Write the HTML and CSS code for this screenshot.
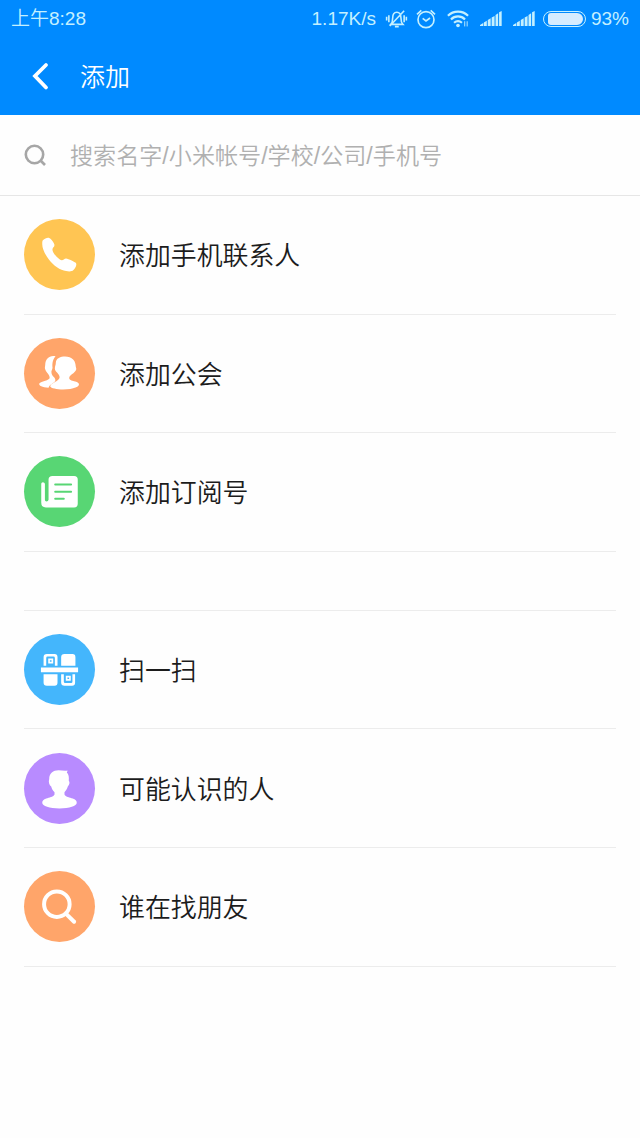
FILE: index.html
```html
<!DOCTYPE html>
<html lang="zh-CN">

<head>
    <meta charset="UTF-8">
    <meta name="viewport" content="width=device-width, initial-scale=1.0">
    <title>添加</title>
    <link rel="stylesheet" href="styles.css">
</head>

<body>
    <header class="header">
        <div class="status">
            <span class="time">上午8:28</span>
            <span class="speed">1.17K/s</span>
            <!--静音-->
            <svg class="mute" viewBox="0 0 66 60">
                <path d="M15 47h38c-5-5-6-9-6-20 0-11-5-18-13-18s-13 7-13 18c0 10-1 15-6 20zM28 54h12M9 18v22M2 23v12M57 18v22M64 23v12M57 4L12 52" />
            </svg>
            <!--闹钟-->
            <svg class="alarm" viewBox="0 0 60 60">
                <circle cx="30" cy="32" r="24" />
                <path d="M20 28l10 8 12-9M3 16L16 4M57 16L44 4" />
            </svg>
            <!--无线-->
            <svg class="wifi" viewBox="0 0 72 60">
                <path d="M3 21c18-18 48-18 66 0M13 33c13-13 33-13 46 0M23 44c8-7 18-7 26 0" />
                <circle cx="36" cy="53" r="6" />
                <path class="thin" d="M58 39v17M66 39v17" />
            </svg>
            <!--信号-->
            <svg class="signal" viewBox="0 0 68 46">
                <path d="M0 46v-3l10-6v9zM12 46V35l9-5v16zM24 46V28l9-6v24zM36 46V20l9-5v31zM48 46V12l8-5v39zM59 46V4l8-4v46z" />
            </svg>
            <svg class="signal" viewBox="0 0 68 46">
                <path d="M0 46v-3l10-6v9zM12 46V35l9-5v16zM24 46V28l9-6v24zM36 46V20l9-5v31zM48 46V12l8-5v39zM59 46V4l8-4v46z" />
            </svg>
            <span class="battery"><i></i></span>
            <span class="percent">93%</span>
        </div>
        <div class="nav">
            <svg class="back" viewBox="0 0 16 28">
                <path d="M14 3L3 14l11 11.500" />
            </svg>
            <h1>添加</h1>
        </div>
    </header>

    <div class="search">
        <svg viewBox="0 0 22 22">
            <circle cx="10.500" cy="10.500" r="8.700" />
            <path d="M16.500 16.500l4.500 4.500" />
        </svg>
        <span>搜索名字/小米帐号/学校/公司/手机号</span>
    </div>

    <ul class="list">
        <li>
            <svg class="icon yellow" viewBox="29 27 214 214">
                <path d="M86 91c6-6 14-9 19-7 5 2 10 9 14 16 3 6 2 9-2 13-3 4-3 8 0 14 4 8 11 15 19 21 5 4 9 4 13 1 4-4 8-4 14-1 9 3 17 7 22 11 5 6-2 16-7 22-4 5-14 5-22 3-18-3-38-16-52-35-12-16-20-33-20-46 0-6 0-10 2-12z" />
            </svg>
            <span>添加手机联系人</span>
        </li>
        <li>
            <svg class="icon orange" viewBox="29 27 214 214">
                <path d="M124 82c-18-4-31 8-31 26 0 6-3 9 1 16 3 7 8 10 11 17 3 8 1 10-7 13-10 3-19 5-23 10-2 6 9 12 28 13 2-5 5-9 14-14 8-5 8-10 4-16-4-5-8-8-9-14-2-7 3-10 3-17-1-9-1-22 9-34z" />
                <path d="M134 87c12-6 34-6 43 5 8 8 7 18 9 25 2 6-1 9-4 12-5 7-13 9-16 15-2 6 0 9 6 11 12 3 19 5 22 9 5 9-15 18-47 18-19 0-37-4-39-9 0-5 5-8 12-12 9-5 18-10 16-18-1-9-14-14-14-24 0-8 3-10 3-18 0-6 3-11 9-14z" />
            </svg>
            <span>添加公会</span>
        </li>
        <li>
            <svg class="icon green" viewBox="29 27 214 214">
                <path d="M115 87h65q11 0 11 11v73q0 11-11 11H95q-14 0-14-14v-57q0-5 5-5t6 5v48q0 5 5 5t6-5V98q0-11 12-11z" />
                <path class="line" d="M123 113h48M123 135h48M123 156h26" />
            </svg>
            <span>添加订阅号</span>
        </li>
        <li class="gap"></li>
        <li>
            <svg class="icon blue" viewBox="29 27 214 214">
                <path d="M80 128h112v14H80zM88 123V97q0-10 10-10h23q9 0 9 10v26h-8V99q0-4-4-4h-18q-4 0-4 4v24zM102 101h15v15h-15zM141 123V97q0-10 10-10h24q9 0 9 10v26zM88 148h42v25q0 10-9 10H98q-10 0-10-10zM141 148h8v23q0 4 4 4h18q4 0 4-4v-23h8v25q0 10-9 10h-23q-10 0-10-10zM155 153h15v15h-15z" />
                <path class="hole" d="M107 106h5v5h-5zM160 158h5v5h-5z" />
            </svg>
            <span>扫一扫</span>
        </li>
        <li>
            <svg class="icon purple" viewBox="29 27 214 214">
                <path d="M105 105c0-17 12-26 28-26 9 0 17 3 27 1 0 3-1 5-2 6 6 6 7 14 6 25 4 4 2 12-3 17-2 8-6 13-10 17v7c4 8 16 9 25 12 8 3 12 6 12 13 0 10-22 17-52 17s-52-7-52-17c0-7 4-10 12-13 9-3 21-4 25-12v-7c-5-4-8-9-10-17-6-5-9-14-6-23z" />
            </svg>
            <span>可能认识的人</span>
        </li>
        <li>
            <svg class="icon orange" viewBox="29 27 214 214">
                <circle class="ring" cx="128" cy="127" r="38.500" />
                <path class="ring" d="M156 156l24 24" />
            </svg>
            <span>谁在找朋友</span>
        </li>
    </ul>
</body>

</html>
```

FILE: styles.css
```css
/*
    基本样式
*/
body,
h1,
ul,
li {
    margin: 0;
    padding: 0;
}

body {
    min-height: 1138px;
    background-color: #fefefe;
    font-family: "Liberation Sans", "Noto Sans CJK SC", sans-serif;
    font-weight: 350;
    color: #1c1c1c;
}

ul {
    list-style: none;
}

svg {
    display: block;
    flex: none;
    overflow: visible;
}

/*
    顶部
*/
.header {
    height: 115px;
    background-color: #008aff;
    color: #fff;
}

.status {
    display: flex;
    align-items: center;
    height: 37px;
    padding: 0 11px;
    font-size: 19px;
    line-height: 37px;
    color: #c4f0ff;
    white-space: nowrap;
}

.status svg {
    fill: none;
    stroke: #c4f0ff;
    stroke-width: 5;
}

.status .speed {
    margin-left: auto;
}

.status .mute {
    width: 21px;
    height: 20px;
    margin-left: 10px;
}

.status .alarm {
    width: 20px;
    height: 20px;
    margin-left: 9px;
}

.status .wifi {
    width: 22px;
    height: 19px;
    margin-left: 11px;
    stroke-width: 7;
}

.status .wifi circle {
    fill: #c4f0ff;
    stroke: none;
}

.status .wifi .thin {
    stroke-width: 3;
}

.status .signal {
    width: 22px;
    height: 15px;
    margin-left: 11px;
    fill: #c4f0ff;
    stroke: none;
}

.battery {
    box-sizing: border-box;
    width: 43px;
    height: 16px;
    margin: 0 5px 0 8px;
    padding: 1px 2px 1px 4px;
    border: 1.5px solid #c4f0ff;
    border-radius: 8px;
}

.battery i {
    display: block;
    height: 100%;
    border-radius: 3px 6px 6px 3px;
    background-color: #d5ecff;
}

.nav {
    display: flex;
    align-items: center;
    height: 78px;
    padding-left: 32px;
}

.nav .back {
    width: 16px;
    height: 28px;
    fill: none;
    stroke: #fff;
    stroke-width: 3.8;
    stroke-linecap: round;
}

.nav h1 {
    margin-left: 32px;
    padding-bottom: 2px;
    font-size: 25px;
    font-weight: 350;
}

/*
    搜索
*/
.search {
    box-sizing: border-box;
    display: flex;
    align-items: center;
    height: 81px;
    padding-left: 24px;
    border-bottom: 1px solid #e6e6e6;
    font-size: 23.1px;
    color: #b0b0b0;
}

.search svg {
    width: 22px;
    height: 22px;
    margin-right: 24px;
    fill: none;
    stroke: #a6a6a6;
    stroke-width: 2.6;
}

.search span {
    padding-bottom: 2px;
}

/*
    列表
*/
.list {
    padding: 0 24px;
}

.list li {
    box-sizing: border-box;
    display: flex;
    align-items: center;
    height: 118.6px;
    border-bottom: 1px solid #ececec;
    font-size: 25.9px;
}

.list li span {
    padding-bottom: 2px;
}

.list .gap {
    height: 59px;
}

.icon {
    width: 71px;
    height: 71px;
    margin-right: 24px;
    border-radius: 50%;
    fill: #fff;
}

.yellow {
    background-color: #ffc553;
}

.orange {
    background-color: #ffa56a;
}

.green {
    background-color: #58d674;
}

.blue {
    background-color: #44b6fc;
}

.purple {
    background-color: #b88bff;
}

.icon .line {
    stroke: #58d674;
    stroke-width: 6;
    stroke-linecap: round;
}

.icon .hole {
    fill: #44b6fc;
}

.icon .ring {
    fill: none;
    stroke: #fff;
    stroke-width: 12;
    stroke-linecap: round;
}
```
